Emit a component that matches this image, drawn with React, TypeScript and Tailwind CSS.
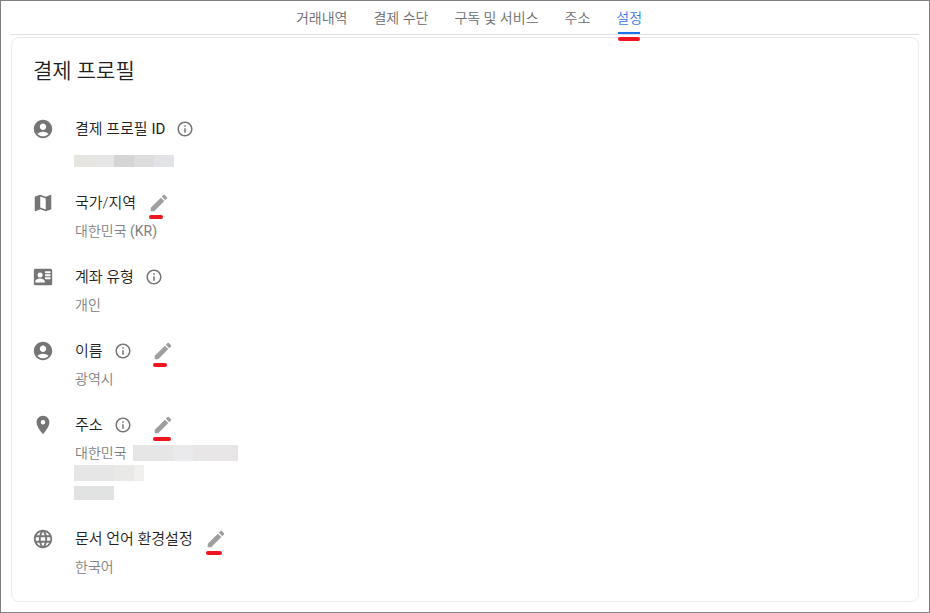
import React from "react";
import type { ReactNode } from "react";
import { MdAccountCircle, MdEdit, MdInfoOutline, MdLanguage, MdMap, MdPlace } from "react-icons/md";

type RowProps = {
  icon: ReactNode;
  label: string;
  suffix?: string;
  info?: boolean;
  edit?: string;
  mark?: string;
  children: ReactNode;
};

const tabs = ["거래내역", "결제 수단", "구독 및 서비스", "주소", "설정"];

function ContactCardIcon() {
  return (
    <svg viewBox="0 0 24 24" className="size-5 shrink-0" fill="currentColor" aria-hidden="true">
      <path
        fillRule="evenodd"
        d="M3 2h18a2 2 0 0 1 2 2v16a2 2 0 0 1-2 2H3a2 2 0 0 1-2-2V4a2 2 0 0 1 2-2zM8.500 6.500a3 3 0 1 0 0 6 3 3 0 0 0 0-6zM2.800 18.500h11.400v-1.200c0-2.300-3.500-3.500-5.700-3.500s-5.700 1.200-5.700 3.500zM14.500 5v2.400h6.500V5zm0 3.600V11h6.500V8.600zm0 3.600v2.400h6.500v-2.400z"
      />
    </svg>
  );
}

function Row({ icon, label, suffix, info, edit, mark, children }: RowProps) {
  return (
    <li className="flex">
      <div className="mr-[22px] flex h-7 w-5 shrink-0 items-center justify-center text-[#757575]">{icon}</div>
      <div>
        <div className="flex h-7 items-center">
          <h2 className="text-[15px] font-[350] text-[#212121]">
            {label}
            {suffix && <span className="font-normal"> {suffix}</span>}
          </h2>
          {info && (
            <button type="button" aria-label={`${label} 정보`} className="ml-[11px] text-[#757575]">
              <MdInfoOutline className="size-4.5" />
            </button>
          )}
          {edit && (
            <button type="button" aria-label={`${label} 수정`} className={`relative text-[#9e9e9e] ${edit}`}>
              <MdEdit className="size-5.5" />
              <span className={`absolute top-full left-px mt-px h-1 rounded-full bg-[#f0141e] ${mark}`} />
            </button>
          )}
        </div>
        <div className="pt-1 text-sm/5 font-[350] text-[#808080]">{children}</div>
      </div>
    </li>
  );
}

function App() {
  return (
    <div className="flex min-h-screen flex-col border border-[#808080] bg-white px-[10px] pb-[10px] font-['Roboto','Noto_Sans_CJK_KR',sans-serif]">
      <nav className="flex h-[34px] justify-center gap-[26px] border-b border-[#e0e0e0] pl-2 text-sm font-[350] text-[#6b6b6b]">
        {tabs.map((tab) =>
          tab === "설정" ? (
            <a key={tab} href="#" aria-current="page" className="relative flex items-center text-[#3b78e7]">
              {tab}
              <span className="absolute inset-x-0.5 bottom-0 h-[2px] bg-[#1a73e8]" />
              <span className="absolute inset-x-0.5 top-full mt-[3px] h-1 rounded-full bg-[#f0141e]" />
            </a>
          ) : (
            <a key={tab} href="#" className="flex items-center">
              {tab}
            </a>
          )
        )}
      </nav>

      <main className="mt-[2px] grow rounded-lg border border-[#ececec] px-[21px] pt-[17px] pb-5">
        <h1 className="text-[21px]/8 font-[350] text-[#212121]">결제 프로필</h1>

        <ul className="mt-7 flex flex-col gap-[22px]">
          <Row icon={<MdAccountCircle className="size-5.5 shrink-0" />} label="결제 프로필" suffix="ID" info>
            <div className="-ml-px flex h-5 items-end">
              <span className="h-3 w-5 bg-[#e6e5e0]" />
              <span className="h-3 w-5 bg-[#e6e6e6]" />
              <span className="h-3 w-5 bg-[#d5d5d5]" />
              <span className="h-3 w-5 bg-[#dddddd]" />
              <span className="h-3 w-5 bg-[#e1e3e6]" />
            </div>
          </Row>
          <Row icon={<MdMap className="size-5.5 shrink-0" />} label="국가/지역" edit="ml-3" mark="w-[14px]">
            대한민국 <span className="font-normal">(KR)</span>
          </Row>
          <Row icon={<ContactCardIcon />} label="계좌 유형" info>
            개인
          </Row>
          <Row icon={<MdAccountCircle className="size-5.5 shrink-0" />} label="이름" info edit="ml-5" mark="w-[14px]">
            광역시
          </Row>
          <Row icon={<MdPlace className="size-5.5 shrink-0" />} label="주소" info edit="ml-5" mark="w-[18px]">
            <div className="flex h-5 items-center gap-1.5">
              대한민국
              <div className="flex">
                <span className="h-4 w-10 bg-[#e6e6e6]" />
                <span className="h-4 w-5 bg-[#eae9eb]" />
                <span className="h-4 w-10 bg-[#e8e6e7]" />
                <span className="h-4 w-[5px] bg-[#e8e3e5]" />
              </div>
            </div>
            <div className="-ml-px flex h-5 items-center">
              <span className="h-4 w-10 bg-[#e6e6e6]" />
              <span className="h-4 w-5 bg-[#e9e9e7]" />
              <span className="h-4 w-[10px] bg-[#f1f0ee]" />
            </div>
            <div className="-ml-px flex h-5 items-center">
              <span className="h-[14px] w-10 bg-[#e1e2e2]" />
            </div>
          </Row>
          <Row icon={<MdLanguage className="size-5.5 shrink-0" />} label="문서 언어 환경설정" edit="ml-3" mark="w-4">
            한국어
          </Row>
        </ul>
      </main>
    </div>
  );
}

export default App;
